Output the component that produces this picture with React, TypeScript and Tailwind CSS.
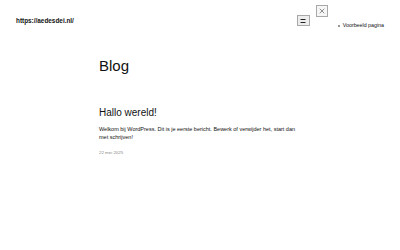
import { X } from "lucide-react"

const font = { fontFamily: '"Liberation Sans", Arial, sans-serif' }

const MenuIcon = () => (
  <svg width="8" height="6" viewBox="0 0 8 6" fill="none" stroke="#222" strokeWidth="1">
    <line x1="1.5" y1="1.5" x2="6.5" y2="1.5" />
    <line x1="1.5" y1="4.5" x2="6.5" y2="4.5" />
  </svg>
)

const Header = () => {
  return (
    <header className="flex items-start pl-4 pr-4">
      <div className="mt-[17px] text-[6.4px] font-bold leading-[8px] text-[#111]">
        https://aedesdei.nl/
      </div>
      <div className="flex-1" />
      <button className="mt-[15px] flex h-[11px] w-[13px] items-center justify-center border border-[#a8a8a8] bg-[#ededed]">
        <MenuIcon />
      </button>
      <nav className="ml-[6px] mt-[5px] flex flex-col">
        <button className="flex h-[12px] w-[12px] items-center justify-center border border-[#a8a8a8] bg-[#f6f6f6]">
          <X size={8} strokeWidth={1.5} color="#222" />
        </button>
        <ul className="ml-[22px] mt-[5px] text-[5.3px] leading-[7px] text-[#111]">
          <li className="flex items-center gap-[3px]">
            <span className="h-[2px] w-[2px] rounded-full bg-[#777]" />
            Voorbeeld pagina
          </li>
        </ul>
      </nav>
    </header>
  )
}

const Post = () => {
  return (
    <article className="mt-[32px]">
      <h2 className="text-[10px] leading-[12px] text-[#111]">Hallo wereld!</h2>
      <p className="mt-[6px] w-[205px] text-[5.5px] leading-[8px] text-[#111]">
        Welkom bij WordPress. Dit is je eerste bericht. Bewerk of verwijder het, start dan met schrijven!
      </p>
      <div className="mt-[9px] text-[4.4px] leading-[6px] text-[#888]">22 mei 2025</div>
    </article>
  )
}

export default function App() {
  return (
    <div className="h-[250px] w-[400px] overflow-hidden bg-white" style={font}>
      <Header />
      <main className="pl-[99px] pt-[28px]">
        <h1 className="text-[15px] leading-[18px] text-[#111]">Blog</h1>
        <Post />
      </main>
    </div>
  )
}
